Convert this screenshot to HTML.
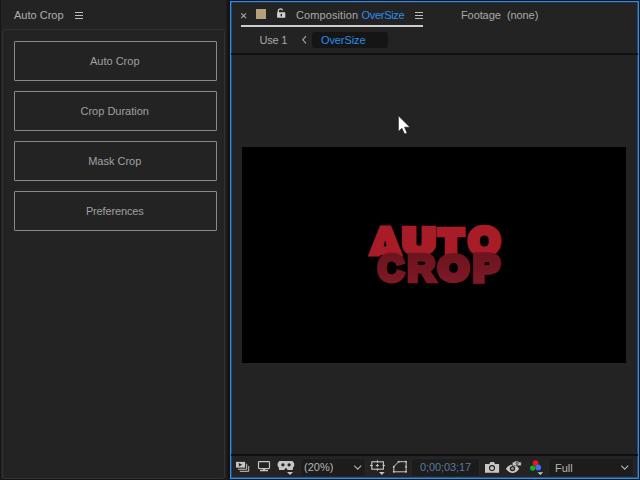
<!DOCTYPE html>
<html>
<head>
<meta charset="utf-8">
<title>Auto Crop</title>
<style>
html,body{margin:0;padding:0;}
body{width:640px;height:480px;overflow:hidden;background:#161616;position:relative;font-family:"Liberation Sans",sans-serif;font-size:11px;color:#a9a9a9;}
.abs{position:absolute;}
.t{position:absolute;white-space:pre;line-height:13px;height:13px;}
#left{left:1px;top:0;width:225px;height:479px;background:#232323;}
#leftgrad{left:226px;top:0;width:4px;height:480px;background:linear-gradient(to right,#1d1d1d,#151313 60%);}
#outline{left:2px;top:29px;width:221px;height:448px;border:1px solid #323232;border-radius:3px;}
.btn{position:absolute;left:14px;width:199.5px;padding-right:1.5px;height:38px;border:1px solid #8a8a8a;border-radius:1px;text-align:center;line-height:38px;color:#a0a0a0;}
#right{left:230px;top:1px;width:407px;height:476px;border:1px solid #2d8ceb;background:#232323;box-sizing:content-box;}
.blue{color:#2d8ceb;}
.dd{top:458px;height:19px;box-sizing:border-box;background:#1c1c1c;border:1px solid #272727;border-radius:3px;}
</style>
</head>
<body>
<div id="left" class="abs"></div>
<div id="leftgrad" class="abs"></div>
<div id="outline" class="abs"></div>
<div class="t" style="left:14px;top:9px;color:#b0b0b0;">Auto Crop</div>
<svg class="abs" style="left:75px;top:12px" width="8" height="7" viewBox="0 0 8 7"><path d="M0 0.5h8M0 3.5h8M0 6.5h8" stroke="#bdbdbd" stroke-width="1" fill="none"/></svg>
<div class="btn" style="top:41px">Auto Crop</div>
<div class="btn" style="top:91px">Crop Duration</div>
<div class="btn" style="top:141px">Mask Crop</div>
<div class="btn" style="top:191px;letter-spacing:-0.15px">Preferences</div>

<div id="right" class="abs"></div>
<div class="abs" style="left:231px;top:2px;width:1px;height:475px;background:rgba(45,140,235,0.35)"></div>
<div class="abs" style="left:637px;top:2px;width:1px;height:475px;background:rgba(45,140,235,0.4)"></div>
<div class="abs" style="left:231px;top:2px;width:407px;height:1px;background:rgba(45,140,235,0.2)"></div>
<div class="abs" style="left:231px;top:477px;width:407px;height:1px;background:rgba(45,140,235,0.45)"></div>
<!-- tab row -->
<svg class="abs" style="left:240px;top:12px" width="8" height="8" viewBox="0 0 8 8"><path d="M1.2 1.3L6 6.1M6 1.3L1.2 6.1" stroke="#a8a8a8" stroke-width="1.1" fill="none"/></svg>
<div class="abs" style="left:256px;top:9px;width:10px;height:10px;background:#b2a07e;"></div>
<svg class="abs" style="left:256px;top:9px" width="10" height="10" viewBox="0 0 10 10"><g fill="#d08a50"><rect x="3" y="3" width="0.8" height="0.8"/><rect x="6.6" y="3" width="0.8" height="0.8"/><rect x="4.8" y="4.6" width="0.8" height="0.8"/><rect x="3.4" y="6.2" width="0.8" height="0.8"/><rect x="5" y="7.6" width="0.9" height="0.9"/></g></svg>
<svg class="abs" style="left:275px;top:7px" width="12" height="12" viewBox="0 0 12 12"><path d="M3.3 6V3.8a2.2 2.2 0 0 1 4.3 -0.4" stroke="#cfcfcf" stroke-width="1.3" fill="none"/><rect x="2.1" y="5.2" width="8.2" height="5.6" rx="0.6" fill="#cfcfcf"/><rect x="5.6" y="6.9" width="1.4" height="2.4" fill="#232323"/></svg>
<div class="t" style="left:296px;top:9px;letter-spacing:0.1px">Composition</div><div class="t blue" style="left:361.5px;top:9px;letter-spacing:-0.3px">OverSize</div>
<svg class="abs" style="left:415px;top:12px" width="8" height="7" viewBox="0 0 8 7"><path d="M0 0.5h8M0 3.5h8M0 6.5h8" stroke="#bdbdbd" stroke-width="1" fill="none"/></svg>
<div class="abs" style="left:241px;top:25px;width:182px;height:2px;background:#cdcdcd;"></div>
<div class="t" style="left:461px;top:9px;letter-spacing:-0.1px">Footage</div><div class="t" style="left:507px;top:9px;letter-spacing:-0.1px">(none)</div>
<!-- breadcrumb row -->
<div class="t" style="left:259.5px;top:34px;letter-spacing:-0.2px">Use 1</div>
<svg class="abs" style="left:301px;top:35px" width="7" height="10" viewBox="0 0 7 10"><path d="M5 1.2L1.8 4.8L5 8.4" stroke="#a9a9a9" stroke-width="1.1" fill="none"/></svg>
<div class="abs" style="left:312px;top:32px;width:76px;height:16px;background:#151515;border-radius:3px;"></div>
<div class="t blue" style="left:321px;top:34px;letter-spacing:-0.1px">OverSize</div>
<div class="abs" style="left:231px;top:53px;width:407px;height:2px;background:#111;"></div>

<!-- comp view -->
<div class="abs" style="left:242px;top:147px;width:384px;height:216px;background:#000;"></div>
<svg class="abs" style="left:242px;top:147px" width="384" height="216" viewBox="242 147 384 216">
<defs><linearGradient id="cg" gradientUnits="userSpaceOnUse" x1="0" y1="-27" x2="0" y2="4"><stop offset="0" stop-color="#6c141f"/><stop offset="1" stop-color="#7e1925"/></linearGradient></defs>
<g font-family="Liberation Sans, sans-serif" font-weight="bold" stroke-linejoin="miter" stroke-miterlimit="3">
<g fill="#a81c28" stroke="#a81c28">
<text font-size="36" stroke-width="5.0" transform="matrix(1.1392 0 0 1.0286 370.53 254.33)">A</text>
<path d="M380 247H393V255H380Z" stroke="none"/><path d="M385.2 240.2L386.6 246.2H383.6Z" fill="#000" stroke="none"/>
<text font-size="34" stroke-width="6.5" transform="matrix(1.2704 0 0 1.0167 403.29 253.44)">U</text>
<text font-size="34" stroke-width="6.5" transform="matrix(1.0981 0 0 1.0252 439.52 253.67)">T</text>
<text font-size="34" stroke-width="6.0" transform="matrix(1.1492 0 0 1.0633 469.12 254.04)">O</text>
</g>
<g fill="url(#cg)" stroke="url(#cg)">
<text font-size="36" stroke-width="4.6" transform="matrix(0.9983 0 0 1.0500 377.75 281.07)">C</text>
<text font-size="36" stroke-width="4.4" transform="matrix(1.0690 0 0 1.0359 407.13 281.37)">R</text>
<text font-size="34" stroke-width="6.0" transform="matrix(1.1271 0 0 1.0367 438.44 280.13)">O</text>
<text font-size="35" stroke-width="5.4" transform="matrix(1.1160 0 0 1.0339 473.28 280.66)">P</text>
</g>
</g>
</svg>
<!-- cursor -->
<svg class="abs" style="left:397px;top:115px" width="14" height="20" viewBox="0 0 14 20"><path d="M1.4 0.8V16.5L4.9 13.2L7.6 19.1L10.1 18L7.5 12.2H12.9Z" fill="#fff" stroke="#1c1c1c" stroke-width="0.6"/></svg>

<!-- bottom bar -->
<div class="abs" style="left:231px;top:454px;width:407px;height:2px;background:#111;"></div>
<div class="abs dd" style="left:300px;width:66px;"></div>
<div class="abs dd" style="left:411px;width:69px;"></div>
<div class="abs dd" style="left:548px;width:86px;"></div>
<svg class="abs" style="left:231px;top:456px" width="407" height="22" viewBox="231 456 407 22">
<g fill="#c6c6c6" stroke="none">
<!-- icon1: play stack -->
<rect x="236" y="461.9" width="9.1" height="5.7"/>
<path d="M238.8 463L242.3 464.75L238.8 466.5Z" fill="#232323"/>
<path d="M246.7 463.8V469.2H238" fill="none" stroke="#c6c6c6" stroke-width="1"/>
<path d="M248.7 466V471.3H239.8" fill="none" stroke="#c6c6c6" stroke-width="1"/>
<!-- icon2: monitor -->
<rect x="258.5" y="461.6" width="11" height="7" rx="0.8" fill="none" stroke="#c6c6c6" stroke-width="1.2"/>
<path d="M262.6 470.1L263.4 468.8H264.8L265.6 470.1H268V471.3H260V470.1Z"/>
<!-- icon3: VR goggles -->
<path d="M279.6 461H292.2Q293 461 293.2 462L294.2 463.6V466L293 467.4V469Q293 470 292 470H288.2Q287.6 470 287.2 469.4L286.4 468.2Q285.9 467.7 285.4 468.2L284.6 469.4Q284.2 470 283.6 470H279.8Q278.8 470 278.8 469V467.4L277.6 466V463.6L278.6 462Q278.8 461 279.6 461Z"/>
<circle cx="282.9" cy="464.8" r="1.6" fill="#232323"/>
<circle cx="289.1" cy="464.8" r="1.6" fill="#232323"/>
<path d="M287 472H293L290 474.9Z"/>
<!-- icon4: grid/guides -->
<rect x="371.8" y="461.8" width="11.6" height="7.4" fill="none" stroke="#c6c6c6" stroke-width="1.1"/>
<path d="M377.4 460.3V462.8M377.4 468.4V470.8M370 465.5H372.6M382.6 465.5H385M377.4 464V467M375.9 465.5H378.9" fill="none" stroke="#c6c6c6" stroke-width="1"/>
<path d="M379 472.1H384.6L381.8 474.9Z"/>
<!-- icon5: mask shape -->
<path d="M398.6 461.7H406.1V471.8H393.8V466.8Z" fill="none" stroke="#c6c6c6" stroke-width="1"/>
<rect x="397.8" y="460.9" width="1.7" height="1.7"/><rect x="405.2" y="460.9" width="1.7" height="1.7"/><rect x="405.2" y="470.9" width="1.7" height="1.7"/><rect x="392.9" y="470.9" width="1.7" height="1.7"/><rect x="392.9" y="465.9" width="1.7" height="1.7"/><rect x="405.2" y="465.9" width="1.7" height="1.7"/>
<!-- icon6: camera -->
<path d="M485 463.9H489.4L490.3 462.1H494.1L495 463.9H499.1V472.7H485Z"/>
<circle cx="492" cy="468.1" r="2.5" fill="#c6c6c6" stroke="#232323" stroke-width="1.1"/>
<!-- icon7: eye + camera -->
<path d="M505.8 468.7Q509 464.5 512.5 464.5Q516 464.5 519.2 468.7Q516 473 512.5 473Q509 473 505.8 468.7Z"/>
<circle cx="512.5" cy="468.6" r="2.1" fill="#8a8a8a" stroke="#232323" stroke-width="1.2"/>
<path d="M512.3 462H514.4L515 460.9H518L518.6 462H521.3V465.8H512.3Z" stroke="#232323" stroke-width="0.6"/>
<circle cx="517.1" cy="463.4" r="1.1" fill="#c6c6c6" stroke="#232323" stroke-width="0.8"/>
<!-- icon8: RGB -->
<circle cx="535.6" cy="463.1" r="2.9" fill="#f01414"/>
<circle cx="532.7" cy="468.1" r="2.7" fill="#12b41a"/>
<circle cx="538.2" cy="467.4" r="2.9" fill="#3c6ef0"/>
<path d="M537.5 472.2H543.2L540.3 475Z"/>
</g>
</svg>
<div class="t" style="left:304px;top:461px;color:#b4b4b4">(20%)</div>
<div class="t" style="left:420px;top:461px;color:#5a7a9e;letter-spacing:-0.1px">0;00;03;17</div>
<div class="t" style="left:555px;top:462px;color:#b4b4b4">Full</div>
<svg class="abs" style="left:353px;top:464px" width="10" height="7" viewBox="0 0 10 7"><path d="M1.2 1.6L4.7 5.2L8.2 1.6" stroke="#b4b4b4" stroke-width="1.1" fill="none"/></svg>
<svg class="abs" style="left:620px;top:464px" width="10" height="7" viewBox="0 0 10 7"><path d="M1.2 1.6L4.7 5.2L8.2 1.6" stroke="#b4b4b4" stroke-width="1.1" fill="none"/></svg>
</body>
</html>
